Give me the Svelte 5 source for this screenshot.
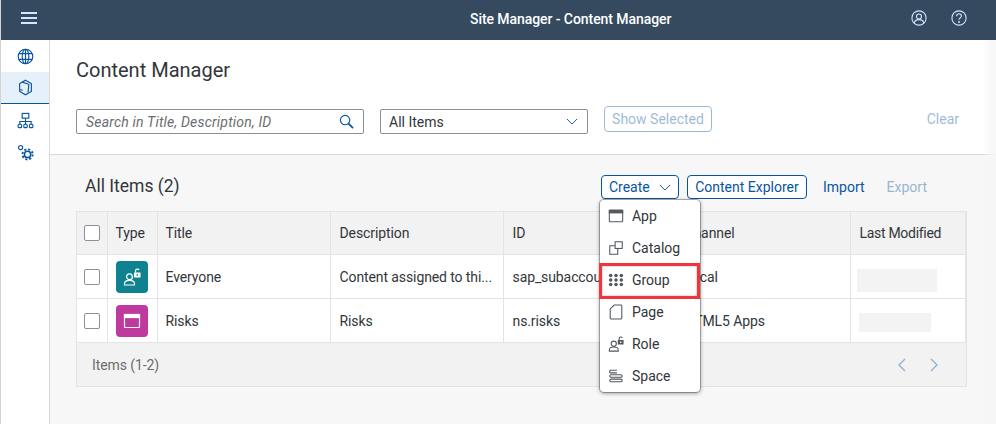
<script>
  const rows = [
    { title: 'Everyone', desc: 'Content assigned to thi...', id: 'sap_subaccou', channel: 'Local', kind: 'role', blur: 'b1' },
    { title: 'Risks', desc: 'Risks', id: 'ns.risks', channel: 'HTML5 Apps', kind: 'app', blur: 'b2' }
  ];
  const menu = ['App', 'Catalog', 'Group', 'Page', 'Role', 'Space'];
</script>

{#snippet roleIcon()}
  <circle cx="6.500" cy="8.700" r="2.900" /><path d="M1.500 17v-1.300c0-2.200 2-3.300 5-3.300s5 1.100 5 3.300V17z" />
  <path d="M12.500 4.500V3a2 2 0 0 1 3.700-1" />
  <path d="M11 4.500h6.500v5H11zM13.500 6.300v1.500h1.500V6.300z" fill="currentColor" fill-rule="evenodd" stroke="none" />
{/snippet}

{#snippet appIcon()}
  <rect x="1.500" y="2.500" width="15" height="13" rx="1" /><rect x="1.500" y="2.500" width="15" height="3" fill="currentColor" />
{/snippet}

<div class="page">
  <header class="shell">
    <button class="hamburger" aria-label="Menu"><span></span><span></span><span></span></button>
    <div class="shell-title">Site Manager - Content Manager</div>
    <div class="shell-actions">
      <svg viewBox="0 0 18 18" class="shell-icon"><circle cx="9" cy="9" r="8" /><circle cx="9" cy="7.300" r="2.800" /><path d="M3.600 14.800c.4-2.600 2.700-4 5.400-4s5 1.400 5.400 4" /></svg>
      <svg viewBox="0 0 18 18" class="shell-icon"><circle cx="9" cy="9" r="8" /><path d="M6.300 7c0-1.600 1.200-2.700 2.700-2.700s2.700 1.100 2.700 2.500c0 2.200-2.700 2-2.700 4.200" /><circle cx="9" cy="13.600" r=".5" /></svg>
    </div>
  </header>

  <div class="body-row">
    <nav class="side">
      <div class="side-item">
        <svg viewBox="0 0 18 18"><circle cx="9" cy="9" r="7.700" /><ellipse cx="9" cy="9" rx="3.500" ry="7.700" /><path d="M2.200 6h13.600M2.200 12h13.600M9 1.300v15.400" /></svg>
      </div>
      <div class="side-item active">
        <svg viewBox="0 0 18 18"><path d="M9 1.300l6.200 3.600v8.200L9 16.700l-6.200-3.600V4.900z" /><path d="M5.500 3.300l7 2.300-.8 8.500M3.500 11.200l2.500 1" /></svg>
      </div>
      <div class="side-item">
        <svg viewBox="0 0 18 18"><rect x="5.500" y="1.500" width="7" height="5" /><path d="M9 6.500V10M3 13v-3h12v3M9 10v3" /><rect x="1.200" y="13" width="3.600" height="3.600" rx="1" /><rect x="7.200" y="13" width="3.600" height="3.600" rx="1" /><rect x="13.200" y="13" width="3.600" height="3.600" rx="1" /></svg>
      </div>
      <div class="side-item">
        <svg viewBox="0 0 18 18"><circle cx="3.800" cy="3.800" r="2.200" /><circle cx="11.200" cy="11" r="3.300" stroke-width="1.600" /><circle cx="11.200" cy="11" r="5.400" stroke-width="2" stroke-dasharray="2.200 2.040" /></svg>
      </div>
    </nav>

    <main class="content">
      <section class="filter">
        <h1>Content Manager</h1>
        <div class="filter-bar">
          <div class="search">
            <span>Search in Title, Description, ID</span>
            <svg viewBox="0 0 16 16"><circle cx="6.500" cy="6.500" r="5" /><path d="M10.200 10.200L15 15" stroke-width="1.800" /></svg>
          </div>
          <div class="select">
            <span>All Items</span>
            <svg viewBox="0 0 14 8"><path d="M1 1l6 6 6-6" /></svg>
          </div>
          <button class="btn show">Show Selected</button>
          <span class="clear">Clear</span>
        </div>
      </section>

      <section class="results">
        <div class="results-head">
          <h2>All Items (2)</h2>
          <div class="actions">
            <div class="create-wrap">
              <button class="btn create">Create <svg viewBox="0 0 14 8"><path d="M1 1l6 6 6-6" /></svg></button>
              <ul class="menu">
                {#each menu as m}
                  <li class:hl={m === 'Group'}>
                    <svg viewBox="0 0 18 18">
                      {#if m === 'App'}
                        {@render appIcon()}
                      {:else if m === 'Catalog'}
                        <rect x="8" y="2" width="8" height="7.500" /><path d="M8 6.500H2v9.500h9v-6.500" />
                      {:else if m === 'Group'}
                        {#each [3, 8, 13] as y}
                          {#each [3, 9, 15] as x}
                            <circle cx={x} cy={y + 1} r="2" fill="currentColor" stroke="none" />
                          {/each}
                        {/each}
                      {:else if m === 'Page'}
                        <path d="M7 1.200h7.500a1 1 0 0 1 1 1v13.600a1 1 0 0 1-1 1H3.500a1 1 0 0 1-1-1V5.500z" />
                      {:else if m === 'Role'}
                        {@render roleIcon()}
                      {:else}
                        <path d="M2 2.500h8M2 5.500h8M2 2.500v3" /><rect x="2" y="7.500" width="14" height="3" rx="1.500" /><rect x="2" y="12.500" width="14" height="3" rx="1.500" />
                      {/if}
                    </svg>
                    <span>{m}</span>
                  </li>
                {/each}
              </ul>
            </div>
            <button class="btn explorer">Content Explorer</button>
            <span class="link">Import</span>
            <span class="link off">Export</span>
          </div>
        </div>

        <div class="table-wrap">
          <table>
            <colgroup>
              <col style="width:30px" /><col style="width:50px" /><col style="width:173px" /><col style="width:173px" /><col style="width:172px" /><col style="width:175px" /><col />
            </colgroup>
            <thead>
              <tr>
                <th><i class="check"></i></th><th class="type">Type</th><th class="title">Title</th><th>Description</th><th>ID</th><th>Channel</th><th class="modified">Last Modified</th>
              </tr>
            </thead>
            <tbody>
              {#each rows as r}
                <tr>
                  <td><i class="check"></i></td>
                  <td class="type">
                    <div class="tile {r.kind}">
                      <svg viewBox="0 0 18 18">
                        {#if r.kind === 'role'}{@render roleIcon()}{:else}{@render appIcon()}{/if}
                      </svg>
                    </div>
                  </td>
                  <td class="title">{r.title}</td><td>{r.desc}</td><td>{r.id}</td><td>{r.channel}</td>
                  <td class="blur-cell"><div class={r.blur}></div></td>
                </tr>
              {/each}
            </tbody>
          </table>
          <div class="foot">
            <span>Items (1-2)</span>
            <div class="pager">
              <svg viewBox="0 0 8 14"><path d="M7 1L1 7l6 6" /></svg>
              <svg viewBox="0 0 8 14"><path d="M1 1l6 6-6 6" /></svg>
            </div>
          </div>
        </div>
      </section>
    </main>
  </div>
  <div class="edge"></div>
</div>

<style>
  :global(body) { margin: 0; background: #f7f7f7; }
  * { box-sizing: border-box; }
  .page {
    width: 996px; height: 424px; overflow: hidden; display: flex; flex-direction: column; position: relative;
    border-left: 1px solid #d5d2cf; font: 14px/20px Roboto, "Noto Sans", sans-serif; color: #32363a;
  }
  svg { fill: none; stroke: currentColor; stroke-width: 1.200; display: block; }
  .edge { position: absolute; right: 0; top: 40px; bottom: 0; width: 14px; background: linear-gradient(to right, rgba(246,246,246,0), rgba(246,246,246,1)); pointer-events: none; }
  .shell { flex: 0 0 40px; background: #354a5f; display: flex; align-items: center; position: relative; padding-bottom: 4px; }
  .hamburger { width: 16px; height: 12px; margin-left: 20px; padding: 0; border: 0; background: none; display: flex; flex-direction: column; justify-content: space-between; }
  .hamburger span { height: 2px; background: #d1e8ff; display: block; }
  .shell-title { position: absolute; left: 469px; top: 9px; color: #fff; font-weight: 500; font-size: 14px; letter-spacing: -.07px; white-space: nowrap; }
  .shell-actions { margin-left: auto; margin-right: 29px; display: flex; gap: 24px; }
  .shell-icon { width: 16px; height: 16px; color: #d1e8ff; }
  .body-row { flex: 1; display: flex; min-height: 0; }
  .side { flex: 0 0 49px; background: #fff; border-right: 1px solid #d9d9d9; color: #0854a0; }
  .side-item { height: 32px; display: flex; align-items: center; justify-content: center; }
  .side-item svg { width: 17px; height: 17px; }
  .side-item.active { background: #e5f0fa; border-bottom: 1px solid #0854a0; }
  .content { flex: 1; min-width: 0; display: flex; flex-direction: column; }
  .filter { height: 115px; background: #fff; border-bottom: 1px solid #d9d9d9; padding: 17px 37px 0 26px; }
  h1 { margin: 0; font-size: 20px; line-height: 27px; font-weight: 400; }
  .filter-bar { margin-top: 22px; display: flex; align-items: flex-start; position: relative; }
  .search, .select { height: 25px; border: 1px solid #89919a; border-radius: 2px; display: flex; align-items: center; justify-content: space-between; background: #fff; margin-top: 3px; }
  .search { width: 288px; padding: 0 9px; font-style: italic; color: #6a6d70; letter-spacing: .2px; }
  .search svg { width: 15px; height: 15px; color: #0854a0; }
  .select { width: 208px; margin-left: 16px; padding: 0 9px 0 8px; }
  .select svg, .create svg { width: 12px; height: 7px; color: #0854a0; stroke-width: 1.100; }
  .btn { font: inherit; color: #0854a0; background: #fff; border: 1px solid #0854a0; border-radius: 4px; height: 24px; padding: 0 7px; white-space: nowrap; }
  .show { margin: 0 0 0 16px; height: 26px; width: 108px; opacity: .4; padding: 0; }
  .clear { margin-left: auto; color: #0854a0; opacity: .4; line-height: 26px; }
  .results { flex: 1; padding: 0 29px 0 26px; position: relative; }
  .results-head { display: flex; align-items: flex-start; justify-content: space-between; height: 56px; padding: 20px 0 0 9px; }
  h2 { margin: 0; font-size: 17.500px; line-height: 22px; font-weight: 400; }
  .actions { display: flex; align-items: center; margin-right: 40px; }
  .create-wrap { position: relative; margin-right: 8px; }
  .create { display: flex; align-items: center; justify-content: space-between; width: 78px; }
  .explorer { width: 120px; padding: 0; }
  .link { color: #0854a0; margin-left: 16px; }
  .link.off { opacity: .4; margin-left: 22px; }
  .menu {
    position: absolute; left: -1px; top: 25px; width: 100px; margin: 0; padding: 0; list-style: none;
    background: #fff; border-radius: 4px; box-shadow: 0 0 0 1px rgba(0,0,0,.25), 0 1px 4px rgba(0,0,0,.45); z-index: 2;
  }
  .menu li { height: 32px; display: flex; align-items: center; gap: 8px; padding-left: 8px; position: relative; }
  .menu svg { width: 16px; height: 16px; color: #53585d; flex: none; }
  .menu .hl::after { content: ""; position: absolute; left: -1px; top: -1px; right: 0; bottom: -3px; border: 3px solid #f0353d; box-shadow: inset 0 0 2px rgba(0,0,0,.4); }
  .table-wrap { border: 1px solid #e4e4e4; border-top: 0; }
  table { width: 100%; border-collapse: collapse; table-layout: fixed; background: #fff; letter-spacing: -.1px; }
  th, td { height: 44px; padding: 0 9px; text-align: left; font-weight: 400; border: 1px solid #e4e4e4; white-space: nowrap; overflow: hidden; }
  th { background: #f2f2f2; height: 43px; }
  th.type, td.type, th.title, td.title { padding: 0 8px; }
  th.modified { letter-spacing: -.3px; }
  thead tr th:first-child, tbody td:first-child { border-left: 0; padding: 0 7px; }
  .check { display: block; width: 16px; height: 16px; background: #fff; border: 1px solid #89919a; border-radius: 2px; }
  .tile { width: 32px; height: 32px; border-radius: 4px; display: flex; align-items: center; justify-content: center; color: #fff; }
  .tile svg { width: 18px; height: 18px; }
  .tile.role { background: #0f828f; }
  .tile.app { background: #c0399f; }
  .blur-cell { padding: 0 0 0 6px; }
  .b1 { width: 80px; height: 23px; margin-top: 7px; background: #f3f3f3; }
  .b2 { width: 72px; height: 19px; margin: 3px 0 0 2px; background: #f3f3f3; }
  .foot { height: 43px; background: #f2f2f2; display: flex; align-items: center; justify-content: space-between; padding: 0 28px 0 15px; color: #6a6d70; letter-spacing: -.1px; }
  .pager { display: flex; gap: 24px; color: #0854a0; opacity: .4; }
  .pager svg { width: 8px; height: 14px; stroke-width: 1.400; }
</style>
